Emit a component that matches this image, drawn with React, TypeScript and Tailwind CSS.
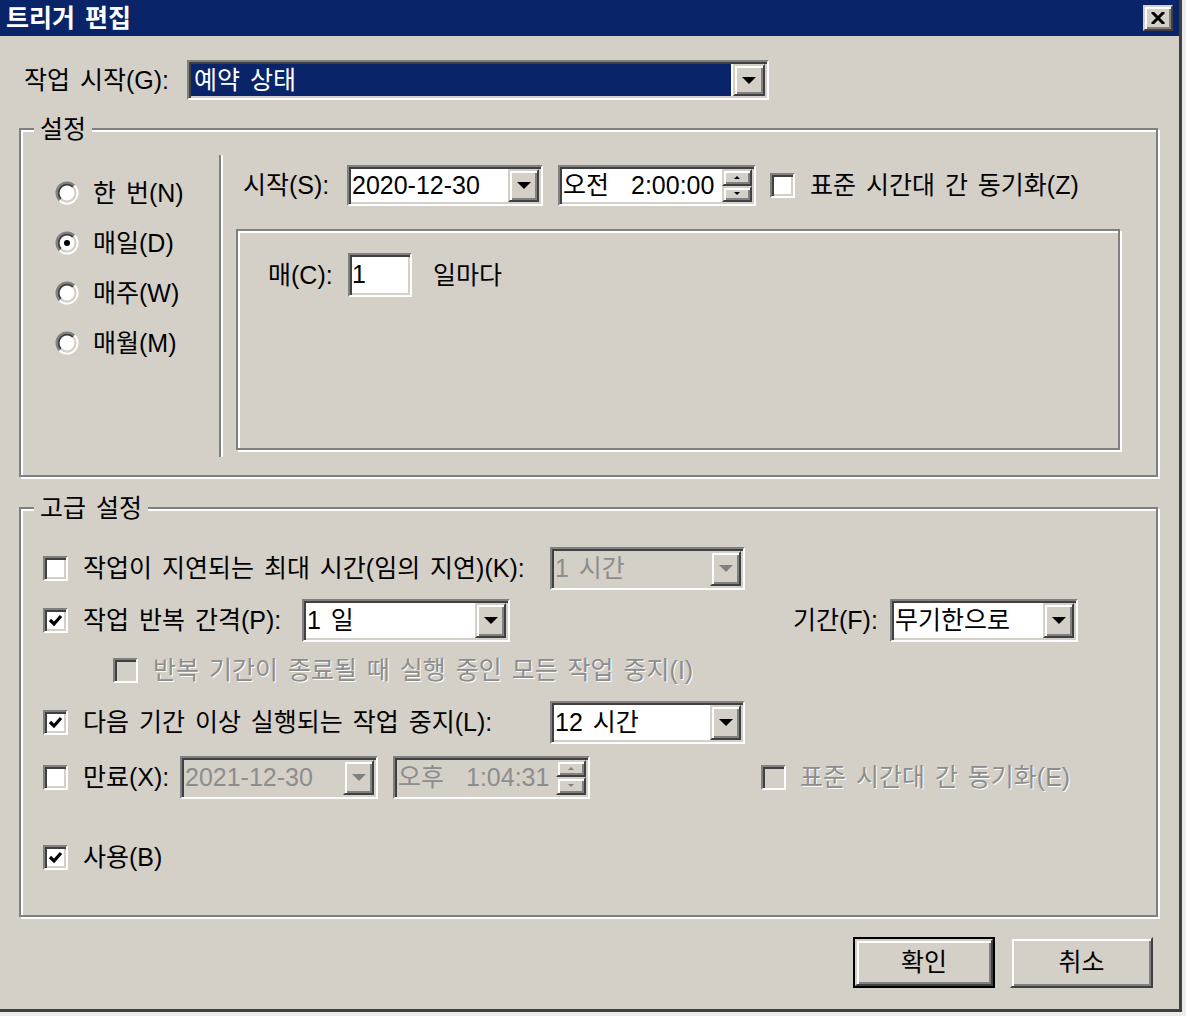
import React from 'react';

// classic 3D border helpers
const SUNKEN =
  'border-2 border-t-[#808080] border-l-[#808080] border-b-white border-r-white shadow-[inset_2px_2px_0_#404040,inset_-2px_-2px_0_#d4d0c8] p-[2px]';
const RAISED =
  'border-2 border-t-[#d4d0c8] border-l-[#d4d0c8] border-b-[#404040] border-r-[#404040] shadow-[inset_2px_2px_0_#ffffff,inset_-2px_-2px_0_#808080]';
const ETCHED = 'border-2 border-[#808080] shadow-[inset_2px_2px_0_#ffffff,2px_2px_0_#ffffff]';
const DIS_LABEL = 'text-[#8d8d8d] [text-shadow:1px_1px_0_#ffffff]';

const DownTri = ({ disabled, small }: { disabled?: boolean; small?: boolean }) => (
    <span
        className={`w-0 h-0 border-x-transparent ${small ? 'border-x-[3px] border-t-[3px]' : 'border-x-[7px] border-t-[7px]'} ${disabled ? 'border-t-[#808080]' : 'border-t-black'}`}
    />
);

const UpTri = ({ disabled }: { disabled?: boolean }) => (
    <span
        className={`w-0 h-0 border-x-transparent border-x-[3px] border-b-[3px] ${disabled ? 'border-b-[#808080]' : 'border-b-black'}`}
    />
);

const DropButton = ({ disabled, className = 'w-[31px]' }: { disabled?: boolean; className?: string }) => (
    <div className={`${RAISED} ${className} bg-[#d4d0c8] flex items-center justify-center shrink-0`}>
        <DownTri disabled={disabled} />
    </div>
);

const Combo = ({ text, className, disabled }: { text: string; className: string; disabled?: boolean }) => (
    <div className={`${SUNKEN} flex ${disabled ? 'bg-[#d4d0c8]' : 'bg-white'} ${className}`}>
        <div className={`flex-1 flex items-center pl-[1px] whitespace-nowrap overflow-hidden ${disabled ? 'text-[#8d8d8d]' : 'text-black'}`}>
            {text}
        </div>
        <DropButton disabled={disabled} />
    </div>
);

const TimeField = ({ ampm, time, className, disabled }: { ampm: string; time: string; className: string; disabled?: boolean }) => (
    <div className={`${SUNKEN} flex ${disabled ? 'bg-[#d4d0c8] text-[#8d8d8d]' : 'bg-white text-black'} ${className}`}>
        <div className="flex-1 flex items-center pl-[1px] whitespace-nowrap overflow-hidden">
            <span>{ampm}</span>
            <span className="ml-[22px]">{time}</span>
        </div>
        <div className="w-[30px] flex flex-col shrink-0">
            <div className={`${RAISED} flex-1 bg-[#d4d0c8] flex items-center justify-center`}>
                <UpTri disabled={disabled} />
            </div>
            <div className={`${RAISED} flex-1 bg-[#d4d0c8] flex items-center justify-center`}>
                <DownTri disabled={disabled} small />
            </div>
        </div>
    </div>
);

const CheckBox = ({ checked, disabled, className = '' }: { checked?: boolean; disabled?: boolean; className?: string }) => (
    <div className={`${SUNKEN} w-[25px] h-[25px] shrink-0 flex items-center justify-center ${disabled ? 'bg-[#d4d0c8]' : 'bg-white'} ${className}`}>
        {checked && (
            <svg width="17" height="17" viewBox="0 0 17 17">
                <polyline points="3,8 7,12 14,4" fill="none" stroke="#000" strokeWidth="3.2" />
            </svg>
        )}
    </div>
);

const Radio = ({ checked }: { checked?: boolean }) => (
    <svg width="24" height="24" viewBox="0 0 24 24" className="shrink-0">
        <circle cx="12" cy="12" r="8" fill="#ffffff" />
        <path d="M4.575 19.425 A10.5 10.5 0 0 1 19.425 4.575" stroke="#808080" strokeWidth="2" fill="none" />
        <path d="M19.425 4.575 A10.5 10.5 0 0 1 4.575 19.425" stroke="#ffffff" strokeWidth="2" fill="none" />
        <path d="M5.99 18.01 A8.5 8.5 0 0 1 18.01 5.99" stroke="#404040" strokeWidth="2" fill="none" />
        <path d="M18.01 5.99 A8.5 8.5 0 0 1 5.99 18.01" stroke="#d4d0c8" strokeWidth="2" fill="none" />
        {checked && <circle cx="12" cy="12" r="3" fill="#000000" />}
    </svg>
);

const GroupTitle = ({ children }: { children: React.ReactNode }) => (
    <span className="absolute left-[13px] top-[-15px] px-[6px] leading-[28px] bg-[#d4d0c8]">{children}</span>
);

const App = () => {
    const radios = [
        { label: '한 번(N)', checked: false },
        { label: '매일(D)', checked: true },
        { label: '매주(W)', checked: false },
        { label: '매월(M)', checked: false },
    ];

    return (
        <div className="w-[1186px] h-[1016px] bg-[#ececec] font-['Liberation_Sans','Noto_Sans_CJK_KR',sans-serif] text-[25px] text-black leading-none [word-spacing:3px]">
            <div className="w-[1182px] h-[1012px] bg-[#d4d0c8] border-r-[3px] border-b-[3px] border-[#404040] flex flex-col">
                {/* title bar */}
                <div className="h-[36px] shrink-0 bg-[#0a246a] flex items-center justify-between pl-[6px] pr-[6px]">
                    <span className="text-white font-bold text-[25px]">트리거 편집</span>
                    <div className={`${RAISED} w-[30px] h-[26px] bg-[#d4d0c8] flex items-center justify-center`}>
                        <svg width="14" height="12" viewBox="0 0 14 12">
                            <path d="M1 0 L13 12 M13 0 L1 12" stroke="#000" strokeWidth="3" />
                        </svg>
                    </div>
                </div>

                {/* start task */}
                <div className="mt-[24px] ml-[24px] flex items-center h-[40px]">
                    <span className="w-[163px]">작업 시작(G):</span>
                    <div className={`${SUNKEN} w-[582px] h-[40px] flex bg-white`}>
                        <div className="flex-1 mr-[2px] bg-[#0a246a] text-white flex items-center pl-[3px]">예약 상태</div>
                        <DropButton className="w-[32px]" />
                    </div>
                </div>

                {/* settings */}
                <div className={`${ETCHED} relative mt-[28px] ml-[19px] w-[1139px] h-[349px] shrink-0 flex`}>
                    <GroupTitle>설정</GroupTitle>
                    <div className="w-[198px] pt-[38px] pl-[34px] flex flex-col">
                        {radios.map((r) => (
                            <div key={r.label} className="h-[50px] flex items-center gap-[14px]">
                                <Radio checked={r.checked} />
                                <span>{r.label}</span>
                            </div>
                        ))}
                    </div>
                    <div className="mt-[25px] h-[302px] w-[4px] border-l-2 border-l-[#808080] border-r-2 border-r-white" />
                    <div className="flex flex-col pt-[35px] pl-[13px]">
                        <div className="flex items-center h-[41px] pl-[7px]">
                            <span className="w-[104px]">시작(S):</span>
                            <Combo text="2020-12-30" className="w-[196px] h-[41px]" />
                            <TimeField ampm="오전" time="2:00:00" className="ml-[15px] w-[198px] h-[41px]" />
                            <CheckBox className="ml-[14px]" />
                            <span className="ml-[15px]">표준 시간대 간 동기화(Z)</span>
                        </div>
                        <div className={`${ETCHED} mt-[23px] w-[884px] h-[221px] pl-[30px] pt-[22px]`}>
                            <div className="flex items-center h-[44px]">
                                <span className="w-[80px]">매(C):</span>
                                <div className={`${SUNKEN} w-[64px] h-[44px] bg-white flex items-center pl-[2px] pb-[4px]`}>1</div>
                                <span className="ml-[21px]">일마다</span>
                            </div>
                        </div>
                    </div>
                </div>

                {/* advanced */}
                <div className={`${ETCHED} relative mt-[30px] ml-[19px] w-[1139px] h-[410px] shrink-0 flex flex-col pl-[22px]`}>
                    <GroupTitle>고급 설정</GroupTitle>

                    <div className="mt-[37px] h-[44px] flex items-center">
                        <CheckBox />
                        <span className="ml-[15px] w-[467px]">작업이 지연되는 최대 시간(임의 지연)(K):</span>
                        <Combo text="1 시간" className="w-[195px] h-[43px]" disabled />
                    </div>

                    <div className="mt-[8px] h-[44px] flex items-center">
                        <CheckBox checked />
                        <span className="ml-[15px] w-[219px]">작업 반복 간격(P):</span>
                        <Combo text="1 일" className="w-[208px] h-[43px]" />
                        <span className="ml-[283px] w-[97px]">기간(F):</span>
                        <Combo text="무기한으로" className="w-[188px] h-[43px]" />
                    </div>

                    <div className="mt-[6px] h-[44px] flex items-center pl-[70px]">
                        <CheckBox disabled />
                        <span className={`ml-[15px] ${DIS_LABEL}`}>반복 기간이 종료될 때 실행 중인 모든 작업 중지(I)</span>
                    </div>

                    <div className="mt-[8px] h-[44px] flex items-center">
                        <CheckBox checked />
                        <span className="ml-[15px] w-[467px]">다음 기간 이상 실행되는 작업 중지(L):</span>
                        <Combo text="12 시간" className="w-[195px] h-[43px]" />
                    </div>

                    <div className="mt-[11px] h-[44px] flex items-center">
                        <CheckBox />
                        <span className="ml-[15px] w-[97px]">만료(X):</span>
                        <Combo text="2021-12-30" className="w-[198px] h-[43px]" disabled />
                        <TimeField ampm="오후" time="1:04:31" className="ml-[15px] w-[197px] h-[43px]" disabled />
                        <CheckBox disabled className="ml-[171px]" />
                        <span className={`ml-[14px] ${DIS_LABEL}`}>표준 시간대 간 동기화(E)</span>
                    </div>

                    <div className="mt-[36px] h-[44px] flex items-center">
                        <CheckBox checked />
                        <span className="ml-[15px]">사용(B)</span>
                    </div>
                </div>

                {/* buttons */}
                <div className="mt-[20px] flex justify-end gap-[15px] pr-[26px]">
                    <button type="button" className="w-[142px] h-[51px] border-2 border-black">
                        <div className={`${RAISED} w-full h-full bg-[#d4d0c8] flex items-center justify-center`}>확인</div>
                    </button>
                    <button type="button" className={`${RAISED} w-[143px] h-[51px] bg-[#d4d0c8] flex items-center justify-center`}>
                        취소
                    </button>
                </div>
            </div>
        </div>
    );
};

export default App;
